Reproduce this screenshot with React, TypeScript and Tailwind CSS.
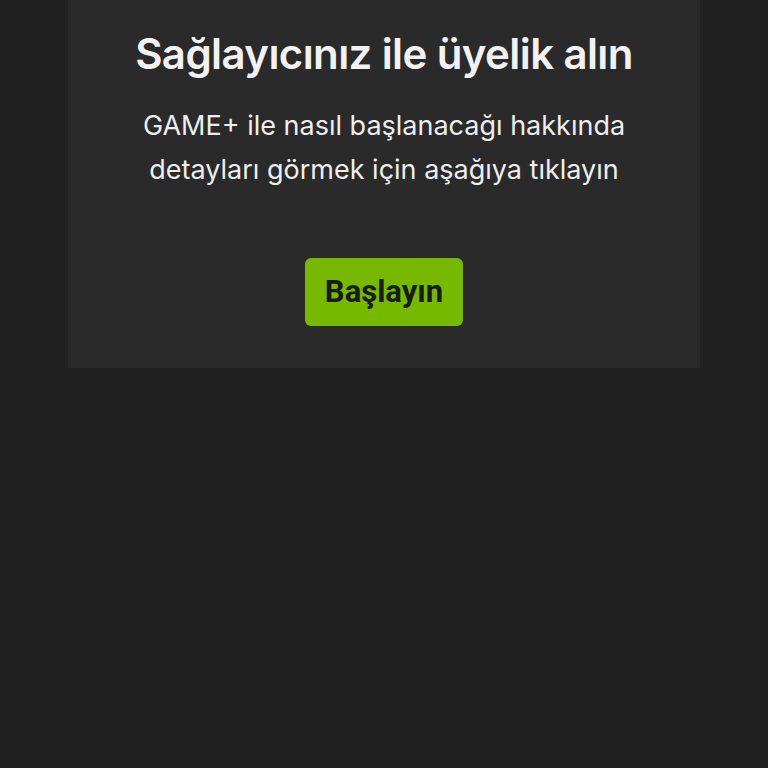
export default function App() {
  return (
    <div className="min-h-[768px] w-full bg-[#202020] font-['Inter',sans-serif]">
      <div className="mx-[68px] flex flex-col items-center bg-[#2a2a2a] px-6 pt-[27px] pb-[42px] text-center">
        <h1 className="text-[42px] leading-[54px] font-semibold text-[#f2f2f2] tracking-[-0.6px]">
          Sağlayıcınız ile üyelik alın
        </h1>
        <p className="mt-[23px] text-[27px] leading-[44px] text-[#eeeeee]">
          GAME+ ile nasıl başlanacağı hakkında
          <br />
          detayları görmek için aşağıya tıklayın
        </p>
        <button className="mt-[66px] h-[68px] w-[158px] rounded-[6px] bg-[#76b900] text-[31px] font-bold text-[#1a1a1a] font-['Roboto',sans-serif]">
          Başlayın
        </button>
      </div>
    </div>
  );
}
